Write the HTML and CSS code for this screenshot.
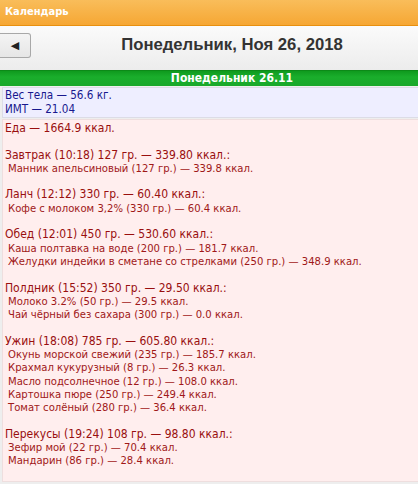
FILE: index.html
```html
<!DOCTYPE html>
<html>
<head>
<meta charset="utf-8">
<link rel="stylesheet" href="styles.css">
</head>
<body>
<div class="page">
  <div class="topbar">Календарь</div>
  <div class="navbar">
    <button class="back">&#9664;</button>
    <div class="title">Понедельник, Ноя 26, 2018</div>
  </div>
  <div class="daybar">Понедельник 26.11</div>
  <div class="weight">
    <div>Вес тела — 56.6 кг.</div>
    <div>ИМТ — 21.04</div>
  </div>
  <div class="food">
    <div class="meal">Еда — 1664.9 ккал.</div>
    <div class="gap"></div>
    <div class="meal">Завтрак (10:18) 127 гр. — 339.80 ккал.:</div>
    <div class="item">Манник апельсиновый (127 гр.) — 339.8 ккал.</div>
    <div class="gap"></div>
    <div class="meal">Ланч (12:12) 330 гр. — 60.40 ккал.:</div>
    <div class="item">Кофе с молоком 3,2% (330 гр.) — 60.4 ккал.</div>
    <div class="gap"></div>
    <div class="meal">Обед (12:01) 450 гр. — 530.60 ккал.:</div>
    <div class="item">Каша полтавка на воде (200 гр.) — 181.7 ккал.</div>
    <div class="item">Желудки индейки в сметане со стрелками (250 гр.) — 348.9 ккал.</div>
    <div class="gap"></div>
    <div class="meal">Полдник (15:52) 350 гр. — 29.50 ккал.:</div>
    <div class="item">Молоко 3.2% (50 гр.) — 29.5 ккал.</div>
    <div class="item">Чай чёрный без сахара (300 гр.) — 0.0 ккал.</div>
    <div class="gap"></div>
    <div class="meal">Ужин (18:08) 785 гр. — 605.80 ккал.:</div>
    <div class="item">Окунь морской свежий (235 гр.) — 185.7 ккал.</div>
    <div class="item">Крахмал кукурузный (8 гр.) — 26.3 ккал.</div>
    <div class="item">Масло подсолнечное (12 гр.) — 108.0 ккал.</div>
    <div class="item">Картошка пюре (250 гр.) — 249.4 ккал.</div>
    <div class="item">Томат солёный (280 гр.) — 36.4 ккал.</div>
    <div class="gap"></div>
    <div class="meal">Перекусы (19:24) 108 гр. — 98.80 ккал.:</div>
    <div class="item">Зефир мой (22 гр.) — 70.4 ккал.</div>
    <div class="item">Мандарин (86 гр.) — 28.4 ккал.</div>
    <div class="gap"></div>
  </div>
</div>
</body>
</html>
```
FILE: styles.css
```css
html, body {
  margin: 0;
  padding: 0;
  overflow: hidden;
  background: #eeeeee;
}
.page {
  width: 464px;
  font-family: "DejaVu Sans Condensed", "DejaVu Sans", sans-serif;
  font-size: 11px;
}
.topbar {
  height: 26px;
  box-sizing: border-box;
  background: linear-gradient(#f9bd5a, #f6a734);
  border-bottom: 1px solid #e8900f;
  color: #fff;
  font-weight: bold;
  padding: 5px 0 0 5px;
  line-height: 14px;
}
.navbar {
  height: 44px;
  box-sizing: border-box;
  background: linear-gradient(#fbfbfb, #ececec);
  display: flex;
  align-items: flex-start;
  padding-top: 7px;
}
.back {
  width: 31px;
  height: 25px;
  margin: 0;
  padding: 0;
  border: 1px solid #a8a8a8;
  border-left: none;
  border-radius: 0 3px 3px 0;
  background: linear-gradient(#f4f4f4, #e6e6e6);
  color: #222;
  font-size: 11px;
  line-height: 23px;
  font-family: "DejaVu Sans", sans-serif;
}
.title {
  flex: 1;
  text-align: center;
  font-family: "Liberation Sans", Arial, sans-serif;
  font-weight: bold;
  font-size: 16.7px;
  line-height: 22px;
  color: #333;
  margin-left: -31px;
  margin-top: 1px;
}
.daybar {
  height: 16px;
  box-sizing: border-box;
  background: linear-gradient(#0f9a1e, #1aae2c 40%, #19a82a);
  border-top: 1px solid #0c8a18;
  color: #fff;
  font-weight: bold;
  font-size: 12px;
  text-align: center;
  line-height: 15px;
}
.weight {
  margin: 1px 0 0 2px;
  background: #eeeeff;
  border: 1px solid #dcdce6;
  color: #18188e;
  padding: 1px 0 1px 2px;
  line-height: 13.5px;
  font-size: 11.6px;
}
.food {
  margin: 1px 0 0 2px;
  background: #ffeeee;
  border: 1px solid #eedede;
  color: #a01818;
  padding: 2px 0 0 2px;
  line-height: 13.3px;
}
.meal {
  font-size: 12px;
  color: #990f0f;
}
.item {
  padding-left: 3px;
  font-size: 11.2px;
}
.gap {
  height: 13.3px;
}
```
